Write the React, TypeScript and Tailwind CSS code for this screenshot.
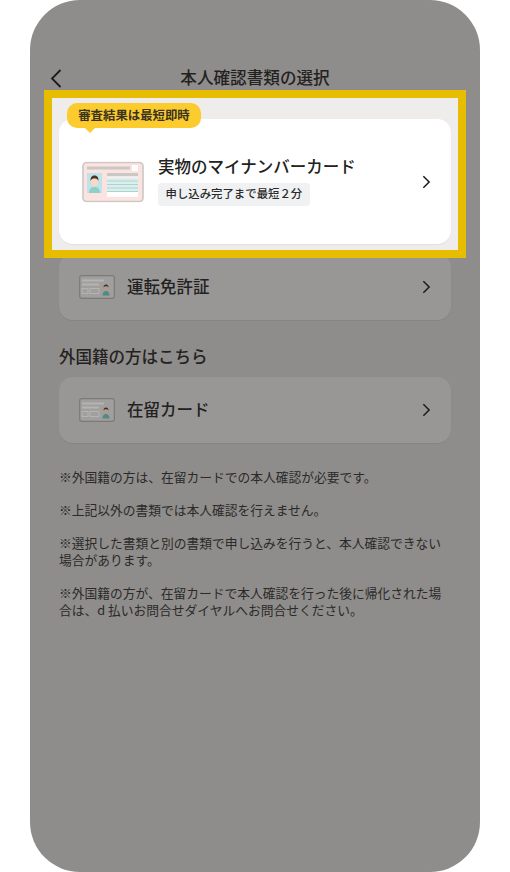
function Chevron({ className }: { className: string }) {
  return (
    <svg className={className} viewBox="0 0 10 16" fill="none" stroke="currentColor" strokeWidth="1.7" strokeLinecap="square">
      <path d="M2 2l6 6-6 6" />
    </svg>
  );
}
function MyNumberIcon() {
  return (
    <svg width="62" height="41" viewBox="0 0 62 41" className="shrink-0 translate-y-[0.5px]">
      <rect x="1" y="1" width="60" height="39" rx="3.500" fill="#fde3df" stroke="#c9c8c5" strokeWidth="1.600" />
      <rect x="5" y="5" width="43" height="3" fill="#c9c8c5" />
      <rect x="50" y="3.500" width="6" height="6" fill="#fff" />
      <rect x="5" y="11.500" width="15" height="20" fill="#bfe3ea" />
      <path d="M7 31.500c0-5 3-6 5.500-6s5.500 1 5.500 6z" fill="#8ecfc6" />
      <ellipse cx="12.500" cy="20" rx="3.800" ry="4.800" fill="#fbd9c0" />
      <path d="M8.700 19.500c-.5-4 1.500-5.500 3.800-5.500s4.300 1.500 3.800 5.500c-.6-2-2-2.500-3.800-2.500s-3.200.5-3.800 2.500z" fill="#4a3327" />
      <rect x="25" y="11.500" width="31" height="3" fill="#c9c8c5" />
      <rect x="25" y="15.500" width="31" height="20" fill="#fff" />
      <rect x="25" y="16" width="31" height="14.500" fill="#dcefed" />
      <rect x="25" y="19" width="31" height="1" fill="#a9d3cf" />
      <rect x="25" y="22.500" width="31" height="1" fill="#a9d3cf" />
      <rect x="25" y="26" width="31" height="1" fill="#a9d3cf" />
      <rect x="25" y="29.500" width="31" height="1" fill="#a9d3cf" />
    </svg>
  );
}
function DimCardIcon() {
  return (
    <svg width="36" height="24" viewBox="0 0 36 24" className="shrink-0">
      <rect x="0.700" y="0.700" width="34.600" height="22.600" rx="2" fill="#a09f9d" stroke="#7b7a78" strokeWidth="1.200" />
      <rect x="3" y="4.500" width="22" height="2" fill="#b5b4b2" />
      <rect x="3" y="8.500" width="17" height="2" fill="#b5b4b2" />
      <rect x="3" y="13.500" width="6" height="5" fill="none" stroke="#b5b4b2" />
      <rect x="11" y="13.500" width="9" height="5" fill="none" stroke="#b5b4b2" />
      <circle cx="27" cy="13" r="2.400" fill="#b59a85" />
      <path d="M24.500 12.500c0-2 1-3 2.500-3s2.500 1 2.500 3c-.8-1-1.600-1.200-2.500-1.200s-1.700.2-2.500 1.200z" fill="#3a302a" />
      <path d="M23.500 20.500c0-3 1.500-4.500 3.500-4.500s3.500 1.500 3.500 4.500z" fill="#4f8a85" />
    </svg>
  );
}
function DimCard({ label, className }: { label: string; className: string }) {
  return (
    <div className={`flex h-[66px] items-center rounded-[14px] bg-[#989796] pl-[20px] pr-[20px] shadow-[0_1px_1px_rgba(0,0,0,0.06)] ${className}`}>
      <DimCardIcon />
      <span className="ml-[12px] flex-1 pb-[2px] text-[16.5px] font-medium leading-none text-[#232221]">{label}</span>
      <Chevron className="h-[14px] w-[9px] text-[#1c1b1a]" />
    </div>
  );
}
const notes = [
  "※外国籍の方は、在留カードでの本人確認が必要です。",
  "※上記以外の書類では本人確認を行えません。",
  "※選択した書類と別の書類で申し込みを行うと、本人確認できない場合があります。",
  "※外国籍の方が、在留カードで本人確認を行った後に帰化された場合は、d 払いお問合せダイヤルへお問合せください。",
];
export default function App() {
  return (
    <div className="h-[872px] w-[510px] bg-white px-[30px] font-['Noto_Sans_CJK_JP','Noto_Sans',sans-serif]">
      <div className="h-[872px] w-[450px] rounded-[50px] bg-[#8f8d8b] px-[29px] pt-[65px]">
        <div className="relative flex h-[24px] items-center justify-center">
          <svg className="absolute left-[-9px] top-[4px] h-[19px] w-[12px] text-[#1c1b1a]" viewBox="0 0 12 19" fill="none" stroke="currentColor" strokeWidth="1.800">
            <path d="M10.500 1L2 9.500l8.500 8.500" />
          </svg>
          <h1 className="text-[16.6px] font-medium leading-none text-[#232221]">本人確認書類の選択</h1>
        </div>
        <div className="relative z-10 mx-[-15px] mt-[1px] h-[168px] border-[8px] border-[#e6bd00] bg-[#eeedec] px-[7px] pt-[21px]">
          <div className="relative flex h-[125px] items-center rounded-[14px] bg-white pl-[23px] pr-[20px] shadow-[0_1px_1px_rgba(0,0,0,0.05)]">
            <div className="absolute left-[8px] top-[-16px] flex h-[25px] w-[134px] items-center justify-center rounded-[10px] bg-[#fccb2e] text-[12.4px] font-bold leading-none text-[#3a3320]">
              審査結果は最短即時
              <span className="absolute bottom-[-5px] left-[17px] h-0 w-0 border-x-[6px] border-t-[6px] border-x-transparent border-t-[#fccb2e]" />
            </div>
            <MyNumberIcon />
            <div className="ml-[14px] flex-1 pb-[3px]">
              <p className="text-[16.5px] font-medium leading-[22px] text-[#232221]">実物のマイナンバーカード</p>
              <span className="mt-[6px] inline-flex h-[23px] items-center rounded-[4px] bg-[#f0f1f3] px-[7.5px] text-[11.4px] font-medium leading-none text-[#2a2a2a]">申し込み完了まで最短２分</span>
            </div>
            <Chevron className="h-[14px] w-[9px] text-[#1c1b1a]" />
          </div>
        </div>
        <DimCard label="運転免許証" className="-mt-[4px]" />
        <h2 className="mt-[26px] text-[16.5px] font-medium leading-[20px] text-[#232221]">外国籍の方はこちら</h2>
        <DimCard label="在留カード" className="mt-[11px]" />
        <div className="mt-[25px] flex flex-col gap-[16px]">
          {notes.map((n) => (
            <p key={n} className="text-[12.75px] leading-[17px] text-[#2b2a29]">{n}</p>
          ))}
        </div>
      </div>
    </div>
  );
}
